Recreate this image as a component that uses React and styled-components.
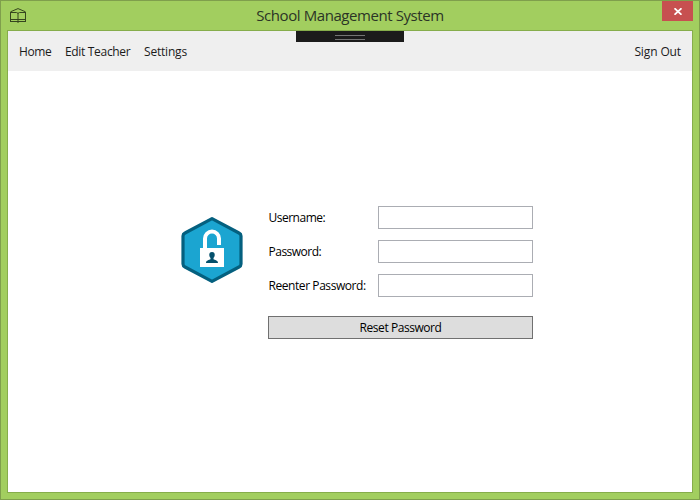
import React from "react";
import styled, { createGlobalStyle } from "styled-components";

const GlobalStyle = createGlobalStyle`
  * { box-sizing: border-box; }
  body { margin: 0; }
`;

const Window = styled.div`
  width: 700px;
  height: 500px;
  display: flex;
  flex-direction: column;
  padding: 0 6px 6px;
  border: 1px solid #7f9f4c;
  background: #a2ce5f;
  color: #000;
  font: 12px/16px "Open Sans", "Noto Sans", sans-serif;
`;

const TitleBar = styled.header`
  flex: 0 0 29px;
  display: grid;
  grid-template-columns: 48px 1fr 48px;
  align-items: start;
`;

const BookIcon = styled.svg`
  display: block;
  margin: 7px 0 0 3px;
`;

const Title = styled.h1`
  margin: 4px 0 0;
  font-size: 15px;
  line-height: 21px;
  font-weight: 400;
  letter-spacing: ${(p) => p.$tracking}px;
  text-align: center;
  white-space: nowrap;
  color: #2b3426;
`;

const CloseButton = styled.button`
  justify-self: end;
  display: flex;
  align-items: flex-start;
  width: 31px;
  height: 20px;
  padding: 7px 0 0 12px;
  border: 0;
  background: #c75050;
`;

const Client = styled.main`
  flex: 1;
  border: 1px solid #86ad4b;
  background: #fff;
`;

const MenuBar = styled.nav`
  position: relative;
  height: 40px;
  display: flex;
  align-items: center;
  padding: 2px 11px 0;
  background: #efefef;
`;

const Text = styled.span`
  letter-spacing: ${(p) => p.$tracking || 0}px;
  white-space: nowrap;
`;

const MenuItem = styled(Text)`
  flex: 0 0 ${(p) => p.$width}px;
  color: #1b1b1b;
  &:last-of-type { margin-left: auto; }
`;

const Grip = styled.div`
  position: absolute;
  top: 0;
  left: 288px;
  width: 108px;
  height: 11px;
  padding: 4px 39px;
  background: #1b1b1b;
  &::before {
    content: "";
    display: block;
    height: 3px;
    border: solid #747474;
    border-width: 1px 0;
  }
`;

const Body = styled.section`
  display: flex;
  align-items: flex-start;
  padding: 135px 0 0 172px;
`;

const LockIcon = styled.svg`
  display: block;
  flex: none;
  margin: 10px 24px 0 0;
`;

const Form = styled.div`
  width: 265px;
  display: grid;
  row-gap: 11px;
`;

const Field = styled.label`
  display: grid;
  grid-template-columns: 110px 155px;
  align-items: center;
`;

const FieldLabel = styled(Text)`
  padding: 1px 0 0 0.5px;
`;

const Input = styled.input`
  width: 155px;
  height: 23px;
  padding: 0 4px;
  border: 1px solid #abadb3;
  border-radius: 0;
  background: #fff;
  outline: 0;
`;

const ResetButton = styled.button`
  height: 23px;
  margin-top: 8px;
  padding: 0;
  border: 1px solid #707070;
  border-radius: 0;
  background: #ddd;
  color: #000;
  font: inherit;
`;

const fields = [
  { label: "Username:", tracking: -0.5 },
  { label: "Password:", tracking: -0.5 },
  { label: "Reenter Password:", tracking: -0.43 },
];

export default function App() {
  return (
    <>
      <GlobalStyle />
      <Window>
        <TitleBar>
          <BookIcon width="16" height="16" viewBox="0 0 16 16" fill="none" stroke="#35451f">
            <path d="M.5 4v10M15.5 4v10M8 5v10" />
            <path d="M1 11.500h14M1 13.500h14" />
            <path d="M.5 3.800 8 .6l7.500 3.200M1 4.500h5.500L8 5.300l1.500-.8H15" />
          </BookIcon>
          <Title $tracking={-0.42}>School Management System</Title>
          <CloseButton aria-label="Close">
            <svg width="8" height="7" viewBox="0 0 8 7" stroke="#fff" strokeWidth="1.8">
              <path d="M.5 .3l7 6.400M7.500 .3l-7 6.400" />
            </svg>
          </CloseButton>
        </TitleBar>
        <Client>
          <MenuBar>
            <MenuItem $width={46} $tracking={-0.4}>Home</MenuItem>
            <MenuItem $width={79} $tracking={-0.32}>Edit Teacher</MenuItem>
            <MenuItem $width={60} $tracking={-0.2}>Settings</MenuItem>
            <MenuItem $width={46.5} $tracking={-0.12}>Sign Out</MenuItem>
            <Grip />
          </MenuBar>
          <Body>
            <LockIcon width="64" height="68" viewBox="0 0 64 68">
              <path
                d="M32 2.700 59 17q2 1 2 3v28q0 2-2 3L32 65.300 5 51q-2-1-2-3V20q0-2 2-3Z"
                fill="#1ba5d1"
                stroke="#04607f"
                strokeWidth="3.200"
                strokeLinejoin="round"
              />
              <path d="M25 32V22.500a7 7 0 0 1 14 0V29" fill="none" stroke="#fff" strokeWidth="4" />
              <path d="M20 32h24v19H20z" fill="#fff" />
              <path
                d="M32 36c2.200 0 2.900 1.500 2.700 3.300-.1 1.400-.8 2.200-1.200 2.700v1.300c1.300 1 4.500.8 4.500 3.700H26c0-2.900 3.200-2.700 4.500-3.700V42c-.4-.5-1.100-1.300-1.200-2.700C29.100 37.500 29.800 36 32 36Z"
                fill="#04506c"
              />
            </LockIcon>
            <Form>
              {fields.map((f) => (
                <Field key={f.label}>
                  <FieldLabel $tracking={f.tracking}>{f.label}</FieldLabel>
                  <Input type="text" />
                </Field>
              ))}
              <ResetButton type="button">
                <Text $tracking={-0.45}>Reset Password</Text>
              </ResetButton>
            </Form>
          </Body>
        </Client>
      </Window>
    </>
  );
}
